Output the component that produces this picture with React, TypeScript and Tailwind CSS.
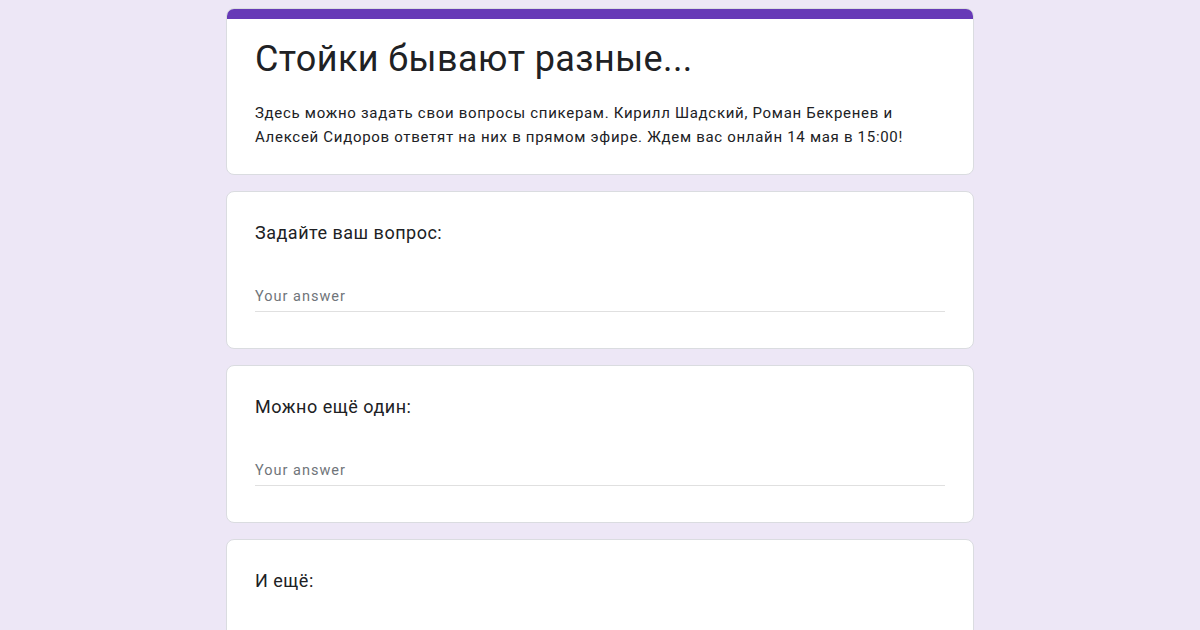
export default function App() {
  return (
    <div
      className="min-h-[630px] h-[630px] overflow-hidden bg-[#ede7f6] text-[#202124]"
      style={{ fontFamily: "Roboto, 'Liberation Sans', sans-serif" }}
    >
      <div className="mx-auto w-[748px] pt-2 flex flex-col gap-4">
        {/* Шапка формы */}
        <div className="rounded-lg border border-[#dadce0] bg-white overflow-hidden">
          <div className="h-[10px] bg-[#673ab7]" />
          <div className="px-[28px] pt-[16px] pb-[25px]">
            <h1 className="text-[36px] leading-[48px] tracking-[0.4px]">Стойки бывают разные...</h1>
            <p className="mt-[18px] text-[15px] leading-6 tracking-[0.7px]">
              Здесь можно задать свои вопросы спикерам. Кирилл Шадский, Роман Бекренев и
              <br />
              Алексей Сидоров ответят на них в прямом эфире. Ждем вас онлайн 14 мая в 15:00!
            </p>
          </div>
        </div>

        <Question label="Задайте ваш вопрос:" />
        <Question label="Можно ещё один:" />
        <Question label="И ещё:" />
      </div>
    </div>
  )
}

function Question({ label }: { label: string }) {
  return (
    <div className="rounded-lg border border-[#dadce0] bg-white px-[28px] pt-[29px] pb-[36px]">
      <div className="text-[18px] leading-6 tracking-[0.5px]">{label}</div>
      <div className="mt-[42px] w-full border-b border-[#e0e0e0] pb-[4px] text-[14.5px] leading-5 tracking-[1px] text-[#70757a]">
        Your answer
      </div>
    </div>
  )
}
